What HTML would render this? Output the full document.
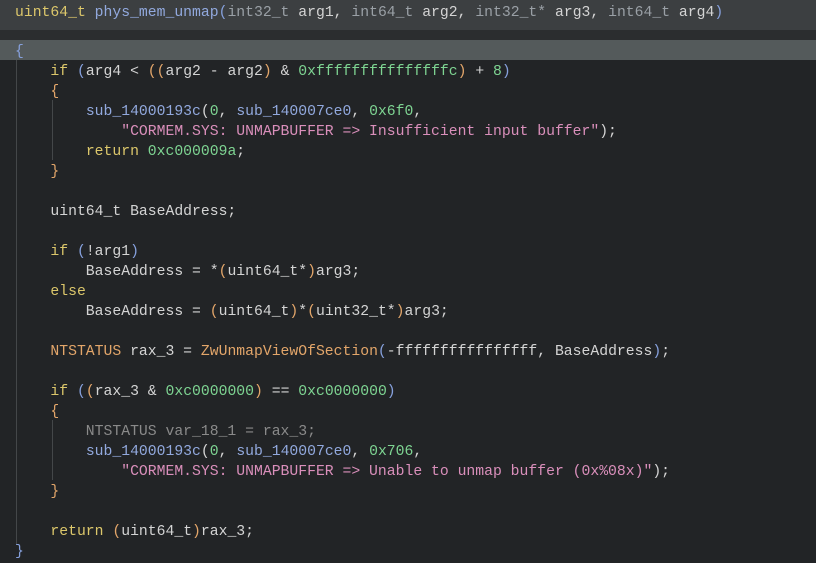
<html><head><style>
body{margin:0;width:816px;height:563px;background:#222426;overflow:hidden;font-family:"Liberation Mono",monospace;font-size:14.75px;color:#d4d4d4}
.h{position:absolute;left:0;top:0;width:816px;height:30px;background:#3c3f41}
.g{position:absolute;left:0;top:30px;width:816px;height:10px;background:#2b2d2f}
.hl{position:absolute;left:0;top:40px;width:816px;height:20px;background:#545a5b}
.l{position:absolute;left:15px;white-space:pre;line-height:20px;margin-top:2px}
.k{color:#dcc76b}.f{color:#92a9de}.n{color:#7ed492}.s{color:#da8fbb}.o{color:#e3a66a}.b{color:#86a0dc}.gr{color:#8a8a8a}.p{color:#9aa0a6}
.v{position:absolute;width:1px;background:#444749}
</style></head><body>
<div class="h"></div><div class="g"></div><div class="hl"></div>
<div class="v" style="left:16px;top:60px;height:485px"></div>
<div class="v" style="left:52px;top:100px;height:60px"></div>
<div class="v" style="left:52px;top:420px;height:60px"></div>
<div class="l" style="top:1px"><span class="k">uint64_t</span> <span class="f">phys_mem_unmap</span><span class="b">(</span><span class="p">int32_t</span> arg1, <span class="p">int64_t</span> arg2, <span class="p">int32_t*</span> arg3, <span class="p">int64_t</span> arg4<span class="b">)</span></div>
<div class="l" style="top:40px"><span class="b">{</span></div>
<div class="l" style="top:60px">    <span class="k">if</span> <span class="b">(</span>arg4 &lt; <span class="o">((</span>arg2 - arg2<span class="o">)</span> &amp; <span class="n">0xfffffffffffffffc</span><span class="o">)</span> + <span class="n">8</span><span class="b">)</span></div>
<div class="l" style="top:80px">    <span class="o">{</span></div>
<div class="l" style="top:100px">        <span class="f">sub_14000193c</span>(<span class="n">0</span>, <span class="f">sub_140007ce0</span>, <span class="n">0x6f0</span>,</div>
<div class="l" style="top:120px">            <span class="s">"CORMEM.SYS: UNMAPBUFFER =&gt; Insufficient input buffer"</span>);</div>
<div class="l" style="top:140px">        <span class="k">return</span> <span class="n">0xc000009a</span>;</div>
<div class="l" style="top:160px">    <span class="o">}</span></div>
<div class="l" style="top:200px">    uint64_t BaseAddress;</div>
<div class="l" style="top:240px">    <span class="k">if</span> <span class="b">(</span>!arg1<span class="b">)</span></div>
<div class="l" style="top:260px">        BaseAddress = *<span class="o">(</span>uint64_t*<span class="o">)</span>arg3;</div>
<div class="l" style="top:280px">    <span class="k">else</span></div>
<div class="l" style="top:300px">        BaseAddress = <span class="o">(</span>uint64_t<span class="o">)</span>*<span class="o">(</span>uint32_t*<span class="o">)</span>arg3;</div>
<div class="l" style="top:340px">    <span class="o">NTSTATUS</span> rax_3 = <span class="o">ZwUnmapViewOfSection</span><span class="b">(</span>-ffffffffffffffff, BaseAddress<span class="b">)</span>;</div>
<div class="l" style="top:380px">    <span class="k">if</span> <span class="b">(</span><span class="o">(</span>rax_3 &amp; <span class="n">0xc0000000</span><span class="o">)</span> == <span class="n">0xc0000000</span><span class="b">)</span></div>
<div class="l" style="top:400px">    <span class="o">{</span></div>
<div class="l gr" style="top:420px">        NTSTATUS var_18_1 = rax_3;</div>
<div class="l" style="top:440px">        <span class="f">sub_14000193c</span>(<span class="n">0</span>, <span class="f">sub_140007ce0</span>, <span class="n">0x706</span>,</div>
<div class="l" style="top:460px">            <span class="s">"CORMEM.SYS: UNMAPBUFFER =&gt; Unable to unmap buffer (0x%08x)"</span>);</div>
<div class="l" style="top:480px">    <span class="o">}</span></div>
<div class="l" style="top:520px">    <span class="k">return</span> <span class="o">(</span>uint64_t<span class="o">)</span>rax_3;</div>
<div class="l" style="top:540px"><span class="b">}</span></div>
</body></html>
